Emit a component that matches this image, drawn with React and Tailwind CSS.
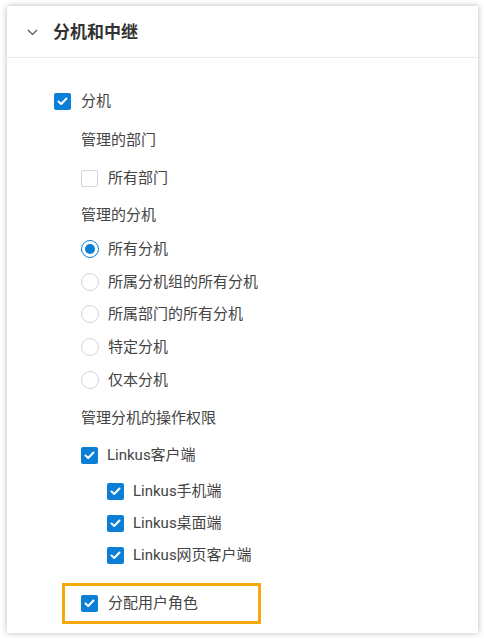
import React from "react"

const font = { fontFamily: 'Roboto, "Noto Sans CJK SC", "Noto Sans", sans-serif' }

function Check({ checked }) {
  if (!checked) {
    return <span className="inline-block w-[17px] h-[17px] rounded-[2px] border border-[#d4d4e0] bg-white shrink-0" />
  }
  return (
    <span className="inline-flex items-center justify-center w-[17px] h-[17px] rounded-[2px] bg-[#0b7fd5] shrink-0">
      <svg width="11" height="9" viewBox="0 0 11 9" fill="none">
        <path d="M1.5 4.5 L4.2 7 L9.5 1.5" stroke="#fff" strokeWidth="2" strokeLinecap="round" strokeLinejoin="round" />
      </svg>
    </span>
  )
}

function Radio({ checked }) {
  if (checked) {
    return (
      <span className="inline-flex items-center justify-center w-[18px] h-[18px] rounded-full border border-[#0b7fd5] bg-white shrink-0">
        <span className="w-[10px] h-[10px] rounded-full bg-[#0b7fd5]" />
      </span>
    )
  }
  return <span className="inline-block w-[18px] h-[18px] rounded-full border border-[#d4d4e0] bg-white shrink-0" />
}

function Row({ children, className = "" }) {
  return <div className={"flex items-center h-8 text-[15px] text-[#444] " + className}>{children}</div>
}

export default function App() {
  const radios = ["所有分机", "所属分机组的所有分机", "所属部门的所有分机", "特定分机", "仅本分机"]
  const radioMargins = ["mt-[2px]", "mt-[1px]", "mt-0", "mt-[1px]", "mt-[1px]"]
  const subs = ["Linkus手机端", "Linkus桌面端", "Linkus网页客户端"]

  return (
    <div className="w-[484px] h-[639px] bg-white pt-[6px] pl-[7px]" style={font}>
      <div className="w-[471px] h-[627px] bg-white shadow-[0_0_6px_rgba(0,0,0,0.28)]">
        {/* header */}
        <div className="h-[52px] flex items-center pl-[20px] pt-[2px] border-b border-[#e8e8f0]">
          <svg width="11" height="7" viewBox="0 0 11 7" fill="none" className="mr-[15px]">
            <path d="M1 1 L5.5 5.5 L10 1" stroke="#555" strokeWidth="1.2" />
          </svg>
          <span className="text-[17px] font-bold text-[#333]">分机和中继</span>
        </div>

        <div className="pl-[47px] pt-[27px]">
          <Row>
            <Check checked />
            <span className="ml-[10px]">分机</span>
          </Row>

          <div className="pl-[27px]">
            <Row className="mt-[7px]">管理的部门</Row>
            <Row className="mt-[6px]">
              <Check />
              <span className="ml-[10px]">所有部门</span>
            </Row>

            <Row className="mt-[5px]">管理的分机</Row>
            {radios.map((r, i) => (
              <Row key={r} className={radioMargins[i]}>
                <Radio checked={i === 0} />
                <span className="ml-[9px]">{r}</span>
              </Row>
            ))}

            <Row className="mt-[6px]">管理分机的操作权限</Row>
            <Row className="mt-[5px]">
              <Check checked />
              <span className="ml-[9px]">Linkus客户端</span>
            </Row>

            <div className="pl-[26px] mt-[4px]">
              {subs.map((s) => (
                <Row key={s}>
                  <Check checked />
                  <span className="ml-[9px]">{s}</span>
                </Row>
              ))}
            </div>
          </div>

          <div className="mt-[12px] ml-[8px] w-[199px] h-[41px] border-[3px] border-[#f6a90b] flex items-center pl-[16px] text-[15px] text-[#444]">
            <Check checked />
            <span className="ml-[10px]">分配用户角色</span>
          </div>
        </div>
      </div>
    </div>
  )
}
